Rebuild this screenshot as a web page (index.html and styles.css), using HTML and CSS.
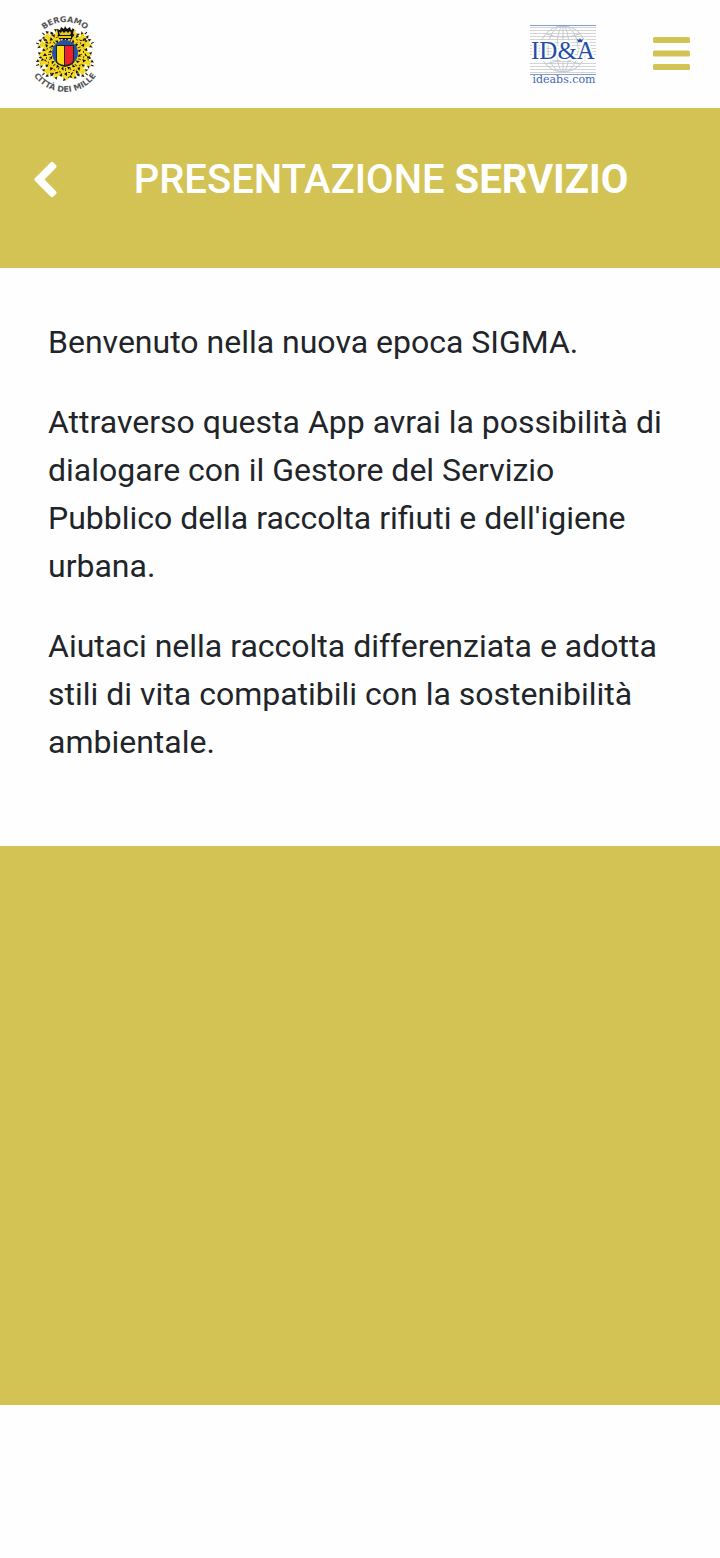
FILE: index.html
```html
<!DOCTYPE html>
<html lang="it">

<head>
    <meta charset="UTF-8">
    <meta name="viewport" content="width=device-width, initial-scale=1.0">
    <title>Presentazione servizio</title>
    <link rel="stylesheet" href="styles.css">
</head>

<body>
    <header class="topbar">
        <a class="crest" href="#" aria-label="Bergamo, Città dei Mille">
            <svg width="70" height="84" viewBox="0 0 70 84">
                <defs>
                    <path id="arc-top" d="M3 42A32 32 0 0 1 67 42" />
                    <path id="arc-bottom" d="M-3 42A38 38 0 0 0 73 42" />
                    <!-- one branch of the wreath, repeated around the shield -->
                    <g id="branch">
                        <path fill="#f4d824" d="M-4 -12l-1 -4 -2 -2 3 -1 -1 -4 3 1 0 -4 2 2 2 -3 1 4 3 -1 -1 4 3 2 -3 2 0 4z" />
                        <path fill="#111" d="M-5 -16l3 1 -1 3zM2 -13l2 -3 1 3zM-1 -20l3 -2 0 4zM-6 -22l3 0 -1 3zM4 -23l3 -1 -1 3zM-2 -27l3 1 -2 2z" />
                        <path fill="#4d4312" d="M0 -17h1v3h-1zM-3 -19h2v1h-2zM3 -19h2v1h-2z" />
                    </g>
                    <g id="branch-long">
                        <use href="#branch" />
                        <path fill="#f4d824" d="M-4 -25l2 -4 2 3 3 -3 1 3 -3 3z" />
                        <path fill="#111" d="M-5 -28l3 1 -1 2zM3 -30l2 3 -3 0zM-1 -31h1v3h-1zM6 -26l1 3 -3 -1z" />
                    </g>
                </defs>
                <g transform="translate(35 42)">
                    <use href="#branch" transform="rotate(20)" />
                    <use href="#branch-long" transform="rotate(46)" />
                    <use href="#branch-long" transform="rotate(67) scale(-1 1)" />
                    <use href="#branch" transform="rotate(90)" />
                    <use href="#branch-long" transform="rotate(112) scale(-1 1)" />
                    <use href="#branch-long" transform="rotate(134)" />
                    <use href="#branch" transform="rotate(158)" />
                    <use href="#branch" transform="rotate(180) scale(-1 1)" />
                    <use href="#branch" transform="rotate(202)" />
                    <use href="#branch-long" transform="rotate(226) scale(-1 1)" />
                    <use href="#branch-long" transform="rotate(249)" />
                    <use href="#branch" transform="rotate(270) scale(-1 1)" />
                    <use href="#branch-long" transform="rotate(292)" />
                    <use href="#branch-long" transform="rotate(314)" />
                    <use href="#branch" transform="rotate(340)" />
                </g>
                <path fill="#111" d="M27 17l3 1 1 -3 3 2 1 -3 2 3 3 -2 1 3 3 -1 -2 10h-13z" />
                <path fill="#e9c91e" d="M29 20l2 1 1 -2 2 2 2 -2 2 2 2 -2 1 2 -1 2h-10zM29 24h12v2h-12z" />
                <ellipse cx="35" cy="41" rx="13" ry="13" fill="#2450a8" />
                <path fill="#222" d="M26 33h18v16q0 4 -9 6q-9 -2 -9 -6z" />
                <path fill="#fbdc12" d="M27 34h7v19q-7 -1 -7 -5z" />
                <path fill="#ee2028" d="M35 34h8v14q0 4 -8 5z" />
                <text class="crest-text"><textPath href="#arc-top" startOffset="50%">BERGAMO</textPath></text>
                <text class="crest-text"><textPath href="#arc-bottom" startOffset="50%">CITTÀ DEI MILLE</textPath></text>
            </svg>
        </a>

        <div class="topbar-right">
            <a class="partner" href="#" aria-label="ID&amp;A ideabs.com">
                <svg width="70" height="64" viewBox="0 0 70 64">
                    <path stroke="#d3d4d7" stroke-width="1" d="M1 5.500h66M1 8.500h66M1 11.500h66M1 14.500h66M1 17.500h66M1 20.500h66M1 23.500h66M1 26.500h66M1 29.500h66M1 32.500h66M1 35.500h66M1 38.500h66M1 41.500h66M1 44.500h66M1 47.500h66M1 50.500h66" />
                    <g fill="none" stroke="#c6c8cc" stroke-width="1">
                        <ellipse cx="34" cy="27" rx="23" ry="23" />
                        <ellipse cx="34" cy="27" rx="15" ry="23" />
                        <ellipse cx="34" cy="27" rx="6" ry="23" />
                        <path d="M17 12q17 6 34 0M17 42q17 -6 34 0M34 4v46" />
                    </g>
                    <path stroke="#7f9fd5" stroke-width="1" d="M1 3.500h66M1 52.500h66" />
                    <text class="partner-name" x="34" y="37">ID&amp;A</text>
                    <path fill="#1f4fa8" d="M48 17l2 1 1 -2 1 2 2 -1 -1 3h-4z" />
                    <text class="partner-site" x="35" y="61">ideabs.com</text>
                </svg>
            </a>
            <button class="menu-btn" type="button" aria-label="Menu">
                <svg width="38" height="34" viewBox="0 0 38 34" fill="#d3c354">
                    <rect x="1" width="37" height="6" rx="1.500" />
                    <rect x="1" y="13.500" width="37" height="6" rx="1.500" />
                    <rect x="1" y="27" width="37" height="6" rx="1.500" />
                </svg>
            </button>
        </div>
    </header>

    <div class="title-bar">
        <button class="back-btn" type="button" aria-label="Indietro">
            <svg width="24" height="38" viewBox="0 0 24 38">
                <path fill="#fff" d="M0.800 17.300L16.600 1.400q1.400 -1.200 2.800 0l2.600 2.600q1.200 1.300 0 2.700L10.500 18.500l11.500 11.800q1.200 1.400 0 2.700l-2.600 2.600q-1.400 1.200 -2.800 0L0.800 19.700q-1 -1.200 0 -2.400z" />
            </svg>
        </button>
        <h1>PRESENTAZIONE <strong>SERVIZIO</strong></h1>
    </div>

    <main class="content">
        <p>Benvenuto nella nuova epoca SIGMA.</p>
        <p>Attraverso questa App avrai la possibilità di dialogare con il Gestore del Servizio Pubblico della raccolta rifiuti e dell'igiene urbana.</p>
        <p>Aiutaci nella raccolta differenziata e adotta stili di vita compatibili con la sostenibilità ambientale.</p>
    </main>

    <footer class="footer"></footer>
</body>

</html>
```
FILE: styles.css
```css
* {
    box-sizing: border-box;
}

body {
    font-family: Roboto, sans-serif;
    margin: 0;
    padding-bottom: 153px;
    display: flex;
    flex-direction: column;
    min-height: 100vh;
    background-color: #fefefe;
    color: #212529;
}

button {
    background: none;
    border: none;
    padding: 0;
    cursor: pointer;
}

svg {
    display: block;
}

.topbar {
    display: flex;
    justify-content: space-between;
    align-items: center;
    padding: 12px 30px;
}

.topbar-right {
    display: flex;
    align-items: center;
    gap: 53px;
}

.crest-text {
    font-family: "DejaVu Sans", sans-serif;
    font-size: 8px;
    font-weight: 700;
    fill: #555;
    text-anchor: middle;
}

.partner-name {
    font-family: "Liberation Serif", serif;
    font-size: 25px;
    fill: #1f4fa8;
    stroke: #fff;
    stroke-width: 4px;
    paint-order: stroke;
    text-anchor: middle;
}

.partner-site {
    font-family: "DejaVu Serif", serif;
    font-size: 11px;
    fill: #3f68b5;
    text-anchor: middle;
}

.title-bar {
    display: flex;
    align-items: center;
    padding: 48px 30px 64px;
    background-color: #d3c354;
}

.back-btn {
    width: 42px;
    padding-left: 4px;
}

.title-bar h1 {
    flex: 1;
    margin: 0;
    font-size: 40px;
    line-height: 48px;
    font-weight: 500;
    text-align: center;
    color: #fff;
}

.title-bar strong {
    font-weight: 700;
}

.content {
    padding: 50px 48px 48px;
}

.content p {
    margin: 0 0 32px;
    font-size: 32px;
    line-height: 48px;
}

.footer {
    flex: 1;
    background-color: #d3c354;
}
```
